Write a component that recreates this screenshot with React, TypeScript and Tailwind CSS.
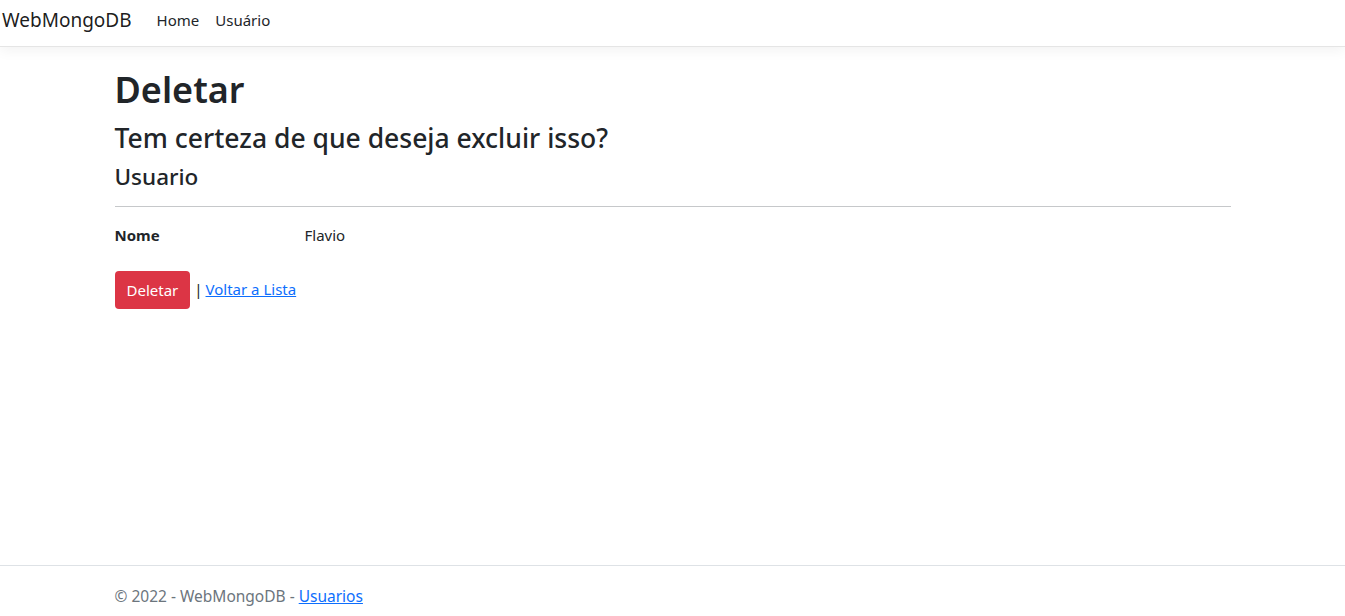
export default function App() {
  const font = { fontFamily: '"Segoe UI", "Noto Sans", "Liberation Sans", sans-serif' };
  return (
    <div style={font} className="min-h-[626px] flex flex-col bg-white text-[#212529]">
      <nav className="h-[47px] flex items-center pb-[6px] border-b border-[#e5e5e5] shadow-[0_4px_12px_rgba(0,0,0,0.05)] bg-white">
        <a className="ml-[2px] text-[19px] text-black/90 leading-none">WebMongoDB</a>
        <ul className="flex ml-[17px] text-[15px]">
          <li className="px-[8px]">Home</li>
          <li className="px-[8px]">Usuário</li>
        </ul>
      </nav>

      <main className="flex-1 w-[1116px] mx-auto pt-[23px] min-h-[518px]">
        <h1 className="text-[36px] font-semibold leading-[40px] mb-[13px]">Deletar</h1>
        <h3 className="text-[26.5px] font-medium leading-[30px] mb-[10px]">Tem certeza de que deseja excluir isso?</h3>
        <div>
          <h4 className="text-[22.5px] font-medium leading-[28px]">Usuario</h4>
          <hr className="mt-[15px] mb-[16px] border-t border-[#c6c8ca]" />
          <dl className="grid grid-cols-[190px_1fr] text-[15px] leading-[24px] mb-[24px]">
            <dt className="font-bold">Nome</dt>
            <dd>Flavio</dd>
          </dl>
          <form className="flex items-center text-[15px]">
            <button type="button" className="bg-[#dc3545] text-white rounded-[4px] h-[38px] px-[12px] leading-[24px]">Deletar</button>
            <span className="ml-[4px] -mt-[2px]">|</span>
            <a href="#" className="ml-[3px] -mt-[2px] text-[#0d6efd] underline">Voltar a Lista</a>
          </form>
        </div>
      </main>

      <footer className="border-t border-[#dee2e6] leading-[60px] text-[#6c757d] text-[15.5px]">
        <div className="w-[1116px] mx-auto">
          © 2022 - WebMongoDB - <a href="#" className="text-[#0d6efd] underline">Usuarios</a>
        </div>
      </footer>
    </div>
  );
}
